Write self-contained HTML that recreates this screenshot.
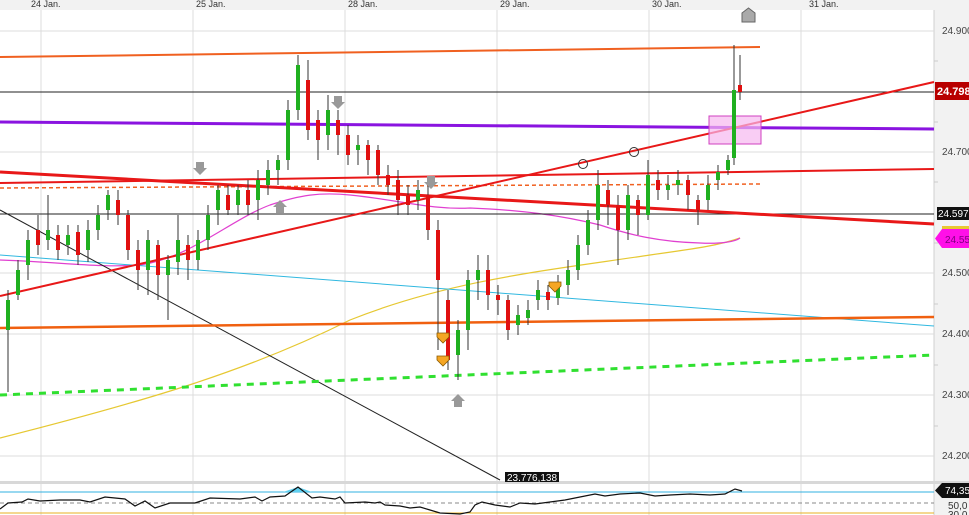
<!DOCTYPE html>
<html><head><meta charset="utf-8"><style>
html,body{margin:0;padding:0;background:#fff;width:969px;height:515px;overflow:hidden}
svg{display:block;font-family:"Liberation Sans",sans-serif}
</style></head><body>
<svg width="969" height="515" viewBox="0 0 969 515">
<rect x="0" y="0" width="969" height="515" fill="#fff"/>
<rect x="0" y="0" width="969" height="10" fill="#f2f2f2"/>
<rect x="934" y="10" width="35" height="505" fill="#f2f2f2"/>
<line x1="934" y1="10" x2="934" y2="515" stroke="#d0d0d0"/>
<g font-size="9" fill="#333">
<text x="31" y="7">24 Jan.</text><text x="196" y="7">25 Jan.</text><text x="348" y="7">28 Jan.</text><text x="500" y="7">29 Jan.</text><text x="652" y="7">30 Jan.</text><text x="809" y="7">31 Jan.</text>
</g>
<g stroke="#dcdcdc" stroke-width="1">
<line x1="41" y1="10" x2="41" y2="515"/><line x1="193" y1="10" x2="193" y2="515"/><line x1="345" y1="10" x2="345" y2="515"/><line x1="497" y1="10" x2="497" y2="515"/><line x1="649" y1="10" x2="649" y2="515"/><line x1="801" y1="10" x2="801" y2="515"/>
<line x1="0" y1="31" x2="934" y2="31"/><line x1="0" y1="152" x2="934" y2="152"/><line x1="0" y1="273" x2="934" y2="273"/><line x1="0" y1="334" x2="934" y2="334"/><line x1="0" y1="395" x2="934" y2="395"/><line x1="0" y1="456" x2="934" y2="456"/>
</g>
<g stroke="#ccc"><line x1="934" y1="61" x2="938" y2="61"/><line x1="934" y1="122" x2="938" y2="122"/><line x1="934" y1="182" x2="938" y2="182"/><line x1="934" y1="243" x2="938" y2="243"/><line x1="934" y1="304" x2="938" y2="304"/><line x1="934" y1="365" x2="938" y2="365"/><line x1="934" y1="426" x2="938" y2="426"/></g>
<g font-size="10" fill="#444">
<text x="942" y="34">24.900</text><text x="942" y="155">24.700</text><text x="942" y="276">24.500</text><text x="942" y="337">24.400</text><text x="942" y="398">24.300</text><text x="942" y="459">24.200</text>
</g>
<path d="M0,438 C150,400 250,370 350,320 C450,280 550,270 650,255 C700,248 720,245 740,238" fill="none" stroke="#e6c832" stroke-width="1.2"/>
<path d="M0,260 C60,262 100,268 140,265 C190,258 230,220 270,205 C300,195 320,192 350,195 C400,200 430,210 470,208 C520,210 560,215 600,225 C630,235 660,242 700,243 C720,244 735,242 740,238" fill="none" stroke="#e040d0" stroke-width="1.2"/>
<line x1="0" y1="255" x2="934" y2="326" stroke="#30b8e0" stroke-width="1"/>
<line x1="0" y1="210" x2="500" y2="480" stroke="#222" stroke-width="1"/>
<line x1="0" y1="92" x2="934" y2="92" stroke="#222" stroke-width="1"/>
<line x1="0" y1="214" x2="934" y2="214" stroke="#222" stroke-width="1"/>
<line x1="0" y1="57" x2="760" y2="47" stroke="#f06020" stroke-width="2"/>
<line x1="0" y1="122" x2="934" y2="129" stroke="#8a14e0" stroke-width="3"/>
<line x1="0" y1="183" x2="934" y2="169" stroke="#e81818" stroke-width="2"/>
<line x1="0" y1="188" x2="760" y2="184" stroke="#f06020" stroke-width="1.5" stroke-dasharray="4,3"/>
<line x1="0" y1="172" x2="934" y2="224" stroke="#e81818" stroke-width="3"/>
<line x1="0" y1="296" x2="934" y2="82" stroke="#e81818" stroke-width="2"/>
<line x1="0" y1="328" x2="934" y2="317" stroke="#f06010" stroke-width="2.5"/>
<line x1="0" y1="395" x2="934" y2="355" stroke="#30e030" stroke-width="3" stroke-dasharray="7,6"/>
<rect x="709" y="116" width="52" height="28" fill="#f6b8f0" fill-opacity="0.7" stroke="#d040c0"/>
<g>
<path d="M8,392V290M18,300V260M28,280V230M38,255V215M48,250V195M58,260V225M68,255V225M78,265V225M88,262V220M98,240V205M108,220V190M118,225V190M128,260V210M138,290V240M148,295V230M158,300V240M168,320V255M178,275V215M188,280V235M198,270V230M208,250V205M218,225V185M228,215V185M238,215V185M248,215V180M258,220V170M268,195V160M278,185V155M288,170V100M298,120V55M308,140V60M318,160V110M328,150V95M338,155V110M348,165V125M358,165V135M368,175V140M378,185V145M388,195V165M398,215V170M408,215V185M418,210V180M428,240V185M438,350V220M448,370V290M458,380V320M468,350V270M478,300V255M488,310V255M498,315V285M508,340V295M518,335V305M528,325V300M538,310V280M548,310V285M558,305V275M568,295V260M578,280V235M588,255V210M598,230V170M608,225V180M618,265V195M628,240V185M638,235V195M648,220V160M658,200V170M668,200V175M678,195V170M688,210V175M698,225V195M708,210V175M718,190V165M728,175V155M734,165V45M740,100V55" stroke="#333" stroke-width="1"/>
<g fill="#20b020">
<rect x="6" y="300" width="4" height="30"/><rect x="16" y="270" width="4" height="25"/><rect x="26" y="240" width="4" height="25"/><rect x="46" y="230" width="4" height="10"/><rect x="66" y="235" width="4" height="10"/><rect x="86" y="230" width="4" height="20"/><rect x="96" y="215" width="4" height="15"/><rect x="106" y="195" width="4" height="15"/><rect x="146" y="240" width="4" height="30"/><rect x="166" y="260" width="4" height="15"/><rect x="176" y="240" width="4" height="22"/><rect x="196" y="240" width="4" height="20"/><rect x="206" y="215" width="4" height="25"/><rect x="216" y="190" width="4" height="20"/><rect x="236" y="190" width="4" height="15"/><rect x="256" y="180" width="4" height="20"/><rect x="266" y="170" width="4" height="15"/><rect x="276" y="160" width="4" height="10"/><rect x="286" y="110" width="4" height="50"/><rect x="296" y="65" width="4" height="45"/><rect x="326" y="110" width="4" height="25"/><rect x="356" y="145" width="4" height="5"/><rect x="416" y="190" width="4" height="10"/><rect x="456" y="330" width="4" height="25"/><rect x="466" y="280" width="4" height="50"/><rect x="476" y="270" width="4" height="10"/><rect x="516" y="315" width="4" height="10"/><rect x="526" y="310" width="4" height="8"/><rect x="536" y="290" width="4" height="10"/><rect x="556" y="285" width="4" height="13"/><rect x="566" y="270" width="4" height="15"/><rect x="576" y="245" width="4" height="25"/><rect x="586" y="220" width="4" height="25"/><rect x="596" y="185" width="4" height="35"/><rect x="626" y="195" width="4" height="35"/><rect x="646" y="175" width="4" height="40"/><rect x="666" y="185" width="4" height="5"/><rect x="676" y="180" width="4" height="5"/><rect x="706" y="185" width="4" height="15"/><rect x="716" y="172" width="4" height="8"/><rect x="726" y="160" width="4" height="10"/><rect x="732" y="90" width="4" height="68"/>
</g>
<g fill="#e01010">
<rect x="36" y="230" width="4" height="15"/><rect x="56" y="235" width="4" height="15"/><rect x="76" y="232" width="4" height="23"/><rect x="116" y="200" width="4" height="15"/><rect x="126" y="215" width="4" height="35"/><rect x="136" y="250" width="4" height="20"/><rect x="156" y="245" width="4" height="30"/><rect x="186" y="245" width="4" height="15"/><rect x="226" y="195" width="4" height="15"/><rect x="246" y="190" width="4" height="15"/><rect x="306" y="80" width="4" height="50"/><rect x="316" y="120" width="4" height="20"/><rect x="336" y="120" width="4" height="15"/><rect x="346" y="135" width="4" height="20"/><rect x="366" y="145" width="4" height="15"/><rect x="376" y="150" width="4" height="25"/><rect x="386" y="175" width="4" height="10"/><rect x="396" y="180" width="4" height="20"/><rect x="406" y="195" width="4" height="10"/><rect x="426" y="195" width="4" height="35"/><rect x="436" y="230" width="4" height="50"/><rect x="446" y="300" width="4" height="60"/><rect x="486" y="270" width="4" height="25"/><rect x="496" y="295" width="4" height="5"/><rect x="506" y="300" width="4" height="30"/><rect x="546" y="292" width="4" height="8"/><rect x="606" y="190" width="4" height="15"/><rect x="616" y="205" width="4" height="25"/><rect x="636" y="200" width="4" height="15"/><rect x="656" y="180" width="4" height="10"/><rect x="686" y="180" width="4" height="15"/><rect x="696" y="200" width="4" height="10"/><rect x="738" y="85" width="4" height="7"/>
</g>
</g>
<g fill="#999">
<path d="M334,96h8v6h3l-7,7l-7,-7h3z"/><path d="M196,162h8v6h3l-7,7l-7,-7h3z"/><path d="M427,176h8v6h3l-7,7l-7,-7h3z"/>
<path d="M276,213h8v-6h3l-7,-7l-7,7h3z"/><path d="M454,407h8v-6h3l-7,-7l-7,7h3z"/>
<path d="M742,22h13v-9l-6.5,-5l-6.5,5z" fill="#aaa" stroke="#666"/>
</g>
<g fill="#f5a623" stroke="#8a5a00" stroke-width="0.8">
<path d="M437,333h12v4l-6,6l-6,-6z"/><path d="M437,356h12v4l-6,6l-6,-6z"/><path d="M549,282h12v4l-6,6l-6,-6z"/>
</g>
<circle cx="583" cy="164" r="4.5" fill="none" stroke="#333"/><circle cx="634" cy="152" r="4.5" fill="none" stroke="#333"/>
<rect x="935" y="82" width="34" height="18" fill="#b80000"/><text x="937" y="95" font-size="11" font-weight="bold" fill="#fff">24.798</text>
<rect x="937" y="207" width="32" height="13" fill="#111"/><text x="938" y="217" font-size="10" fill="#fff">24.597</text>
<path d="M942,229h27v19h-27l-7,-9.5z" fill="#ff10e8"/><path d="M942,226h27v3h-27z" fill="#e8c830"/><text x="945" y="243" font-size="10" fill="#800080">24.55</text>
<rect x="0" y="481" width="969" height="3" fill="#d8d8d8"/>
<line x1="0" y1="492" x2="934" y2="492" stroke="#30b0e0"/>
<line x1="0" y1="503" x2="934" y2="503" stroke="#888" stroke-dasharray="4,3"/>
<line x1="0" y1="513" x2="934" y2="513" stroke="#e8b020"/>
<path d="M283,492L298,487L312,492Z" fill="#60d0f0"/>
<path d="M0,509L8,503L22,502L28,499L40,501L60,500L80,500L90,502L105,497L125,499L135,506L145,501L155,508L170,503L195,503L210,498L240,499L255,497L262,501L270,497L285,496L298,487L312,498L320,497L335,499L340,497L345,503L365,502L375,503L380,502L385,505L400,506L410,508L420,507L430,510L440,513L460,514L470,512L475,505L482,502L495,505L510,507L520,503L535,504L550,502L565,500L580,497L595,494L605,496L620,494L640,493L655,496L670,495L690,494L710,495L725,494L735,489L742,491" fill="none" stroke="#111" stroke-width="1.2"/>
<rect x="505" y="472" width="54" height="10" fill="#111"/><text x="507" y="481" font-size="10" fill="#fff">23.776,138</text>
<path d="M942,483h27v15h-27l-7,-7.5z" fill="#111"/><text x="945" y="494" font-size="10" fill="#fff">74,35</text>
<text x="948" y="509" font-size="10" fill="#333">50,0</text><text x="948" y="518" font-size="10" fill="#333">30,0</text>
</svg>
</body></html>
